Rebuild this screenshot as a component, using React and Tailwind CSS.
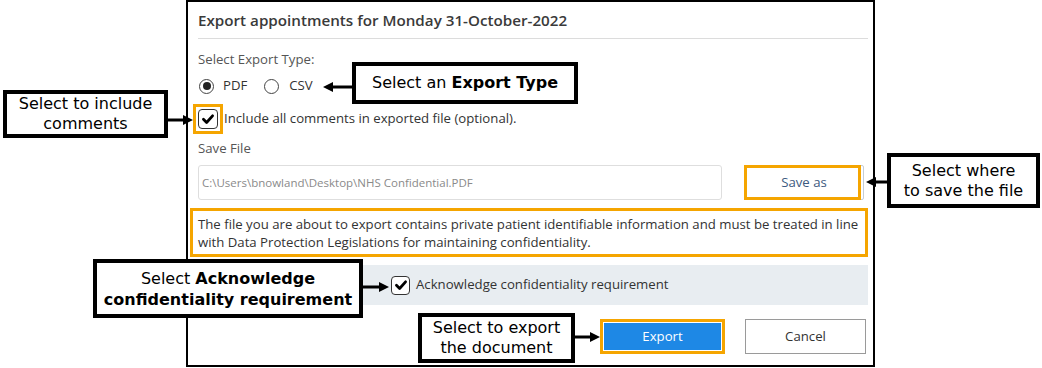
import React from 'react';

function Check({ className = '' }) {
  return (
    <span className={`flex items-center justify-center rounded-[4px] border-[1.5px] border-[#333] bg-white ${className}`}>
      <svg viewBox="0 0 16 16" className="h-[14px] w-[14px]">
        <path d="M2.8 8.4 L6.4 12 L13.2 4.4" fill="none" stroke="#000" strokeWidth="3.2" strokeLinecap="round" strokeLinejoin="round" />
      </svg>
    </span>
  );
}

function Radio({ checked }) {
  return (
    <span className="flex h-[15px] w-[15px] items-center justify-center rounded-full border border-[#444] bg-white">
      {checked && <span className="h-[8px] w-[8px] rounded-full bg-[#222]" />}
    </span>
  );
}

function ArrowRight({ className, w }) {
  return (
    <svg className={`absolute ${className}`} width={w} height="12" viewBox={`0 0 ${w} 12`}>
      <line x1="0" y1="6" x2={w - 8} y2="6" stroke="#000" strokeWidth="3" />
      <polygon points={`${w - 10},1 ${w},6 ${w - 10},11`} fill="#000" />
    </svg>
  );
}

function ArrowLeft({ className, w }) {
  return (
    <svg className={`absolute ${className}`} width={w} height="12" viewBox={`0 0 ${w} 12`}>
      <line x1="8" y1="6" x2={w} y2="6" stroke="#000" strokeWidth="3" />
      <polygon points="10,1 0,6 10,11" fill="#000" />
    </svg>
  );
}

const callout =
  "absolute flex flex-col items-center justify-center border-4 border-black bg-white text-center text-black font-['DejaVu_Sans',sans-serif]";

export default function App() {
  return (
    <div className="relative h-[368px] w-[1042px] overflow-hidden bg-white font-['Open_Sans',sans-serif] text-[#333]">
      {/* dialog */}
      <div className="ml-[186px] flex h-[367px] w-[689px] flex-col border-2 border-black pl-[10px] pr-[5px]">
        <div className="flex h-[37px] items-center border-b border-[#dcdcdc] text-[15.2px] font-semibold text-[#3a3a3a]">
          Export appointments for Monday 31-October-2022
        </div>

        <div className="mt-[10px] flex h-[22px] items-center text-[13.2px] text-[#555]">Select Export Type:</div>

        <div className="mt-[4px] flex h-[22px] items-center text-[13.2px] text-[#333]">
          <span className="ml-[1px]"><Radio checked /></span>
          <span className="ml-[9px]">PDF</span>
          <span className="ml-[17px]"><Radio /></span>
          <span className="ml-[10px]">CSV</span>
        </div>

        <div className="mt-[7px] -ml-[5px] flex h-[30px] items-center text-[13.2px] text-[#333]">
          <span className="flex h-[30px] w-[30px] items-center justify-center border-[3px] border-[#f5a500]">
            <Check className="h-[20px] w-[20px]" />
          </span>
          <span className="ml-[1px]">Include all comments in exported file (optional).</span>
        </div>

        <div className="mt-[4px] flex h-[22px] items-center text-[13.2px] text-[#555]">Save File</div>

        <div className="mt-[5px] flex h-[35px] items-stretch">
          <div className="flex w-[524px] items-center rounded-[3px] border border-[#dedede] px-[3px] text-[11.5px] text-[#8a8a8a]">
            C:\Users\bnowland\Desktop\NHS Confidential.PDF
          </div>
          <div className="relative ml-auto mr-[4px] w-[120px]">
            <div className="flex h-full items-center justify-center rounded-[2px] border border-[#c5cdd6] text-[13.2px] text-[#3d5a80]">
              Save as
            </div>
            <div className="absolute bottom-0 left-0 right-[3px] top-0 border-[3px] border-[#f5a500]" />
          </div>
        </div>

        <div className="mt-[8px] -ml-[8px] flex h-[49px] flex-col justify-center border-[3px] border-[#f5a500] pl-[5px] text-[13.2px] leading-[18px] text-[#333]">
          <span>The file you are about to export contains private patient identifiable information and must be treated in line</span>
          <span>with Data Protection Legislations for maintaining confidentiality.</span>
        </div>

        <div className="mt-[8px] -ml-[8px] flex h-[40px] items-center bg-[#e8edf1] pl-[201px] text-[13.2px] text-[#333]">
          <Check className="h-[19px] w-[19px]" />
          <span className="ml-[6px]">Acknowledge confidentiality requirement</span>
        </div>

        <div className="mt-[14px] flex h-[35px] items-stretch justify-end pr-[2px]">
          <div className="flex w-[125px] border-[3px] border-[#f5a500] p-[1px]">
            <div className="flex flex-1 items-center justify-center bg-[#1e88e5] text-[13.2px] text-white">Export</div>
          </div>
          <div className="ml-[20px] flex w-[121px] items-center justify-center border border-[#9a9a9a] bg-white text-[13.2px] text-[#333]">
            Cancel
          </div>
        </div>
      </div>

      {/* callouts */}
      <div className={`${callout} left-[352px] top-[62px] h-[42px] w-[226px] text-[16px]`}>
        <span>
          Select an <b>Export Type</b>
        </span>
      </div>
      <ArrowLeft className="left-[323px] top-[81px]" w={29} />

      <div className={`${callout} left-[3px] top-[90px] h-[48px] w-[165px] text-[16px] leading-[20px]`}>
        <span>Select to include</span>
        <span>comments</span>
      </div>
      <ArrowRight className="left-[167px] top-[114px]" w={26} />

      <div className={`${callout} left-[887px] top-[153px] h-[55px] w-[153px] text-[16px] leading-[20px]`}>
        <span>Select where</span>
        <span>to save the file</span>
      </div>
      <ArrowLeft className="left-[866px] top-[176px]" w={21} />

      <div className={`${callout} left-[93px] top-[259px] h-[59px] w-[270px] text-[16px] leading-[21px]`}>
        <span>
          Select <b>Acknowledge</b>
        </span>
        <b>confidentiality requirement</b>
      </div>
      <ArrowRight className="left-[363px] top-[281px]" w={26} />

      <div className={`${callout} left-[418px] top-[313px] h-[50px] w-[157px] text-[16px] leading-[20px]`}>
        <span>Select to export</span>
        <span>the document</span>
      </div>
      <ArrowRight className="left-[575px] top-[331px]" w={25} />
    </div>
  );
}
